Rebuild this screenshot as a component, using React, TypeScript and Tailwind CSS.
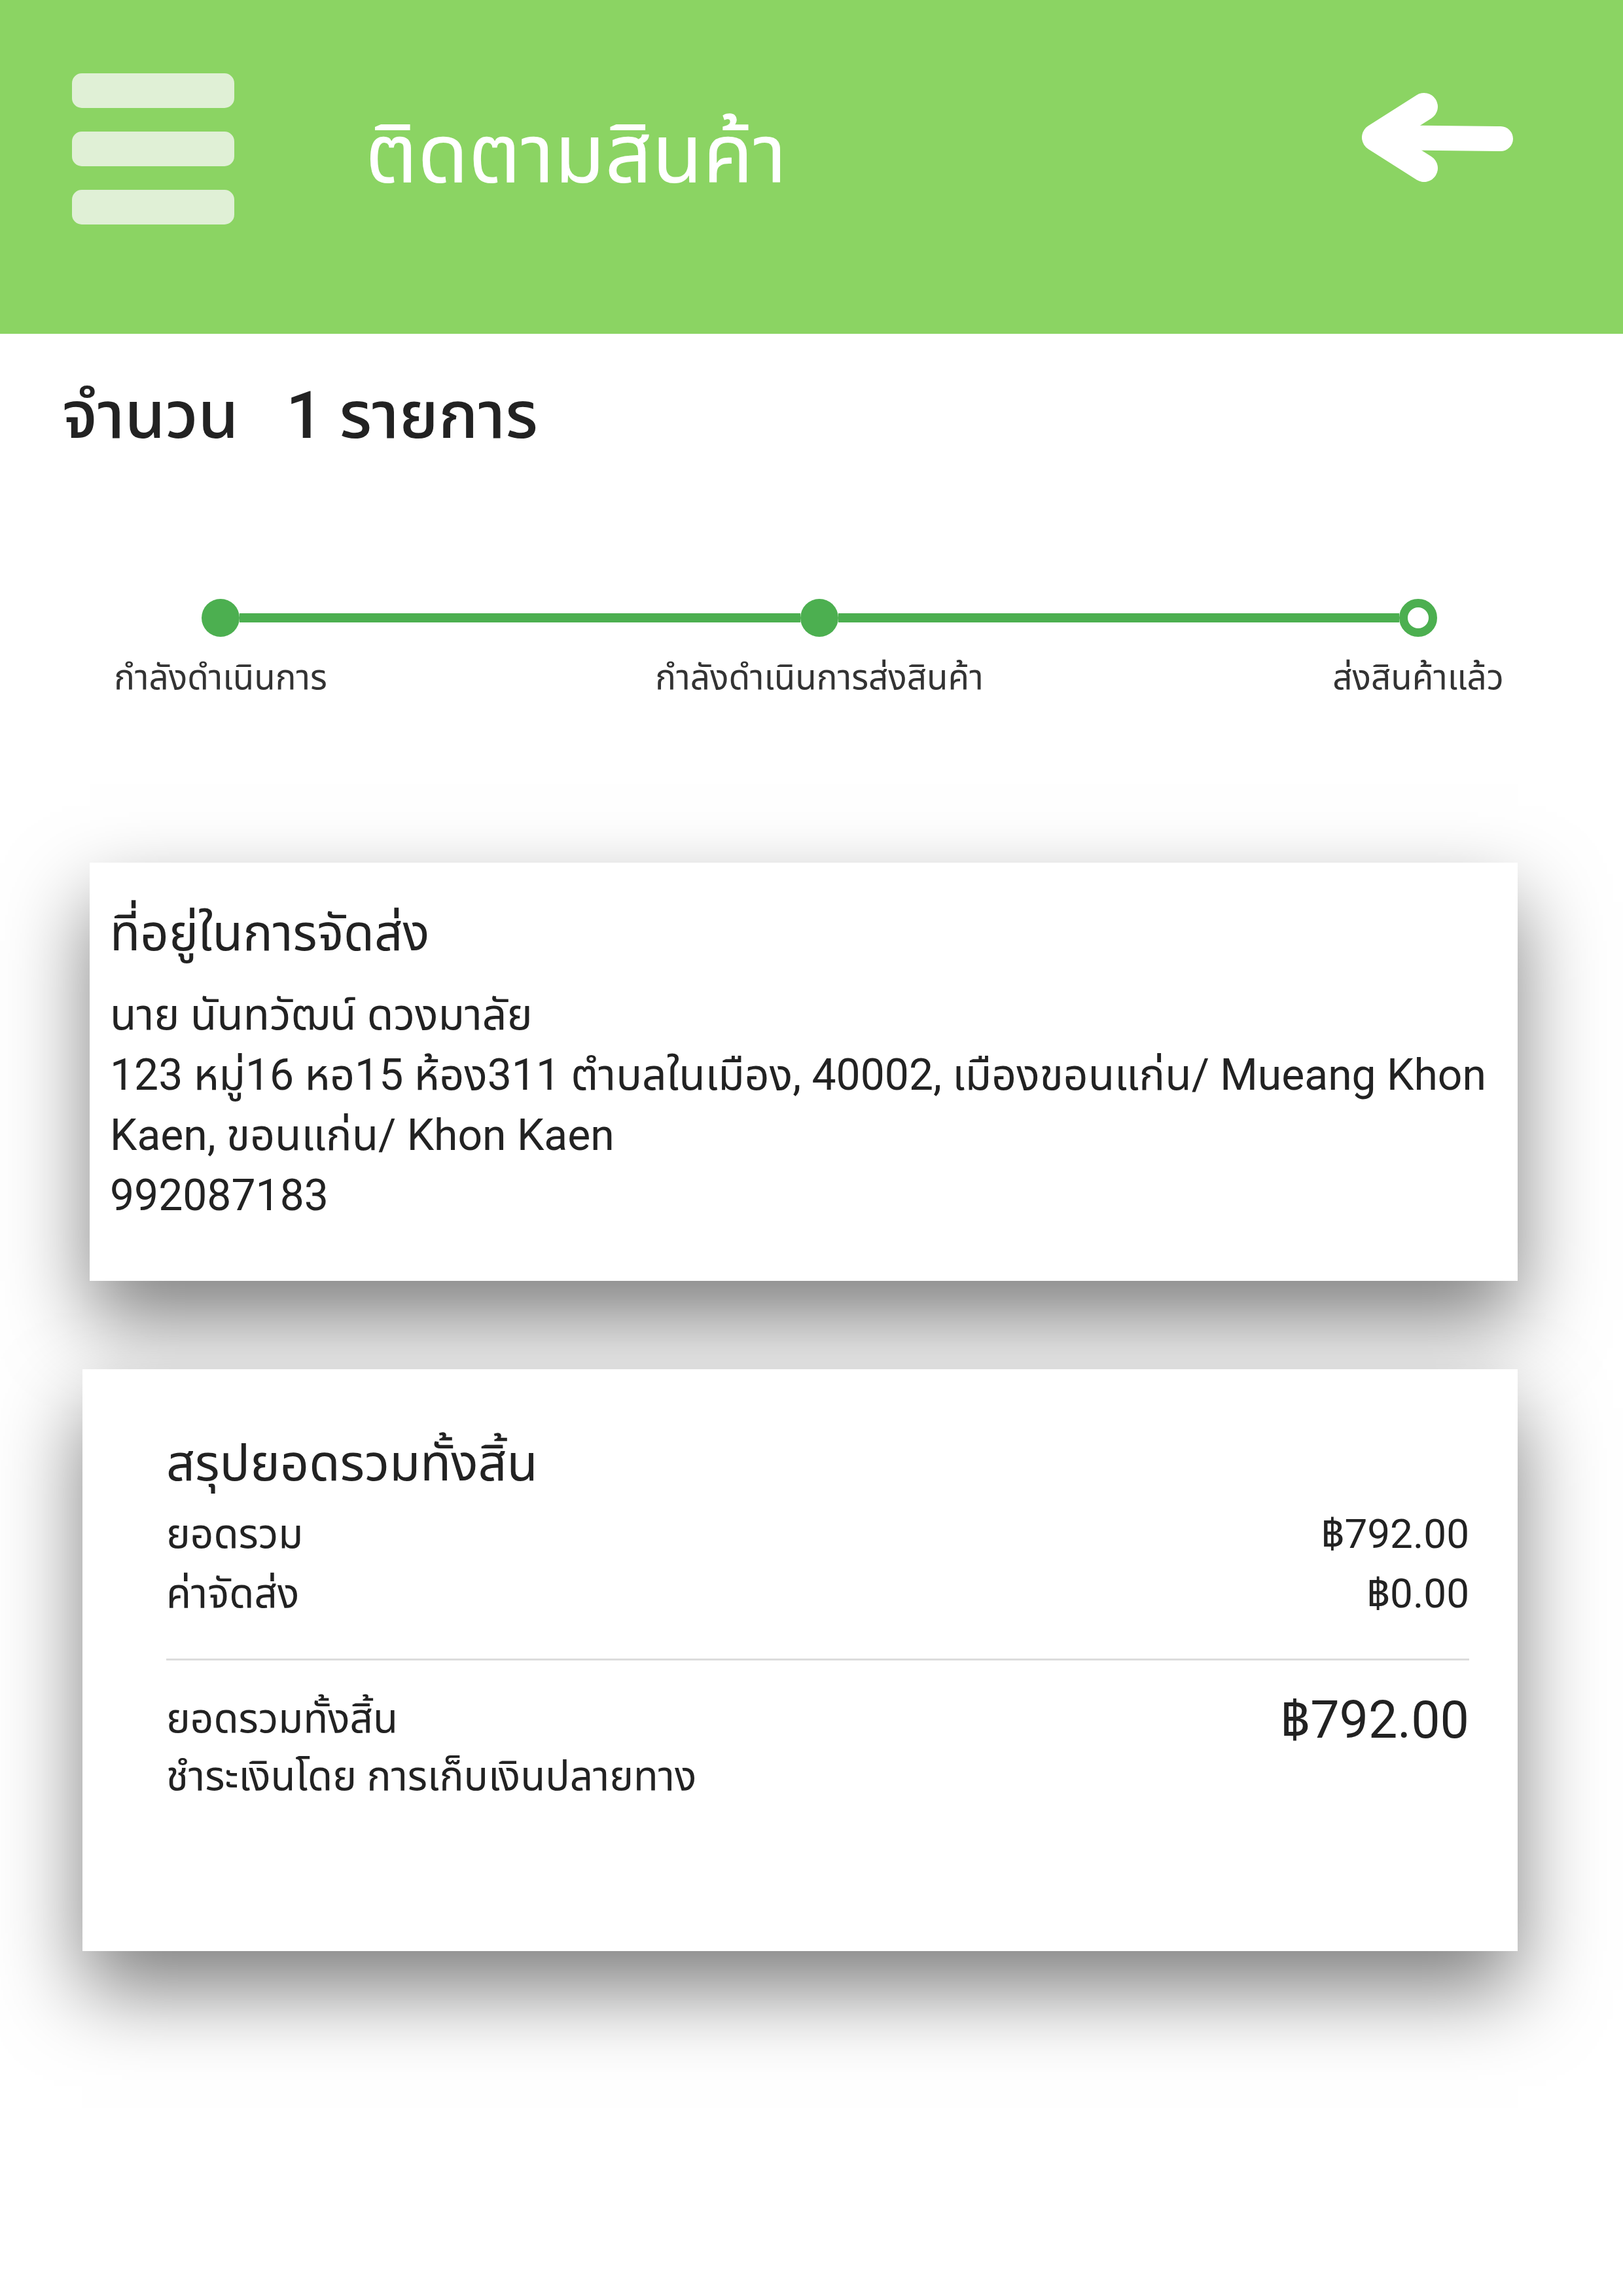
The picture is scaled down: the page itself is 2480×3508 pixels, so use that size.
import React from "react";

const font = "font-['Roboto','Noto_Sans_Thai','Noto_Sans',sans-serif]";

const steps = [
	{ label: "กำลังดำเนินการ", done: true },
	{ label: "กำลังดำเนินการส่งสินค้า", done: true },
	{ label: "ส่งสินค้าแล้ว", done: false },
];

const StepDot: React.FC<{ label: string; done: boolean }> = ({ label, done }) => (
	<div className="flex flex-col items-center w-[58px] shrink-0">
		{done ? (
			<div className="w-[58px] h-[58px] rounded-full bg-[#4caf50]" />
		) : (
			<div className="w-[58px] h-[58px] rounded-full bg-white border-[13px] border-[#4caf50]" />
		)}
		<div className="mt-[30px] whitespace-nowrap text-[53px] leading-[64px] text-[#333]">{label}</div>
	</div>
);

const Stepper = () => (
	<div className="h-[403px] flex items-start pl-[308px] pr-[284px]">
		{steps.map((step, i) => (
			<React.Fragment key={step.label}>
				{i > 0 && <div className="flex-1 h-[14px] mt-[22px] bg-[#4caf50]" />}
				<StepDot label={step.label} done={step.done} />
			</React.Fragment>
		))}
	</div>
);

const Row: React.FC<{ label: string; value: string }> = ({ label, value }) => (
	<div className="flex justify-between text-[62px] leading-[91px] text-[#222]">
		<span>{label}</span>
		<span>{value}</span>
	</div>
);

export default function App() {
	return (
		<div className={`w-[2480px] min-h-[3508px] bg-white ${font}`}>
			{/* header */}
			<header className="h-[510px] bg-[#8bd463] flex items-start pl-[110px] pr-[162px]">
				<div className="flex flex-col gap-[36px] mt-[112px]">
					<div className="w-[248px] h-[53px] rounded-[15px] bg-[#e0f0d6]" />
					<div className="w-[248px] h-[53px] rounded-[15px] bg-[#e0f0d6]" />
					<div className="w-[248px] h-[53px] rounded-[15px] bg-[#e0f0d6]" />
				</div>
				<h1 className="ml-[200px] mt-[166px] text-[126px] leading-[140px] font-normal text-white whitespace-nowrap">ติดตามสินค้า</h1>
				<div className="flex-1" />
				<svg width="240" height="140" viewBox="0 0 240 140" className="mt-[140px]" fill="none" stroke="white" strokeLinecap="round" strokeLinejoin="round">
					<path d="M98 23 L24 70 L98 117" strokeWidth="42" />
					<path d="M30 70 L215 72" strokeWidth="38" />
				</svg>
			</header>

			<div className="h-[405px] pl-[95px] pt-[80px]">
				<div className="text-[100px] leading-[90px] text-[#222] font-medium whitespace-nowrap">
					จำนวน<span className="ml-[72px]">1 รายการ</span>
				</div>
			</div>

			<Stepper />

			{/* shipping address */}
			<div className="ml-[137px] mr-[161px] h-[639px] bg-white shadow-[0_60px_120px_rgba(0,0,0,0.5)] pt-[62px] pl-[31px] relative">
				<div className="text-[76px] leading-[92px] text-[#222]">ที่อยู่ในการจัดส่ง</div>
				<div className="mt-[33px] text-[66px] leading-[92px] text-[#222]">
					<div className="whitespace-nowrap">นาย นันทวัฒน์ ดวงมาลัย</div>
					<div className="whitespace-nowrap">123 หมู่16 หอ15 ห้อง311 ตำบลในเมือง, 40002, เมืองขอนแก่น/ Mueang Khon</div>
					<div className="whitespace-nowrap">Kaen, ขอนแก่น/ Khon Kaen</div>
					<div>992087183</div>
				</div>
			</div>

			{/* summary */}
			<div className="ml-[126px] mr-[161px] mt-[135px] h-[889px] bg-white shadow-[0_60px_120px_rgba(0,0,0,0.5)] pt-[98px] pl-[128px] pr-[74px] relative">
				<div className="text-[77px] leading-[92px] text-[#222] whitespace-nowrap">สรุปยอดรวมทั้งสิ้น</div>
				<div className="mt-[16px]">
					<Row label="ยอดรวม" value="฿792.00" />
					<Row label="ค่าจัดส่ง" value="฿0.00" />
				</div>
				<div className="mt-[54px] h-[3px] bg-[#dcdcdc]" />
				<div className="mt-[45px] flex justify-between items-start text-[#222]">
					<div className="text-[62px] leading-[88px]">
						<div>ยอดรวมทั้งสิ้น</div>
						<div className="whitespace-nowrap">ชำระเงินโดย การเก็บเงินปลายทาง</div>
					</div>
					<div className="text-[79px] leading-[92px]">฿792.00</div>
				</div>
			</div>
		</div>
	);
}
